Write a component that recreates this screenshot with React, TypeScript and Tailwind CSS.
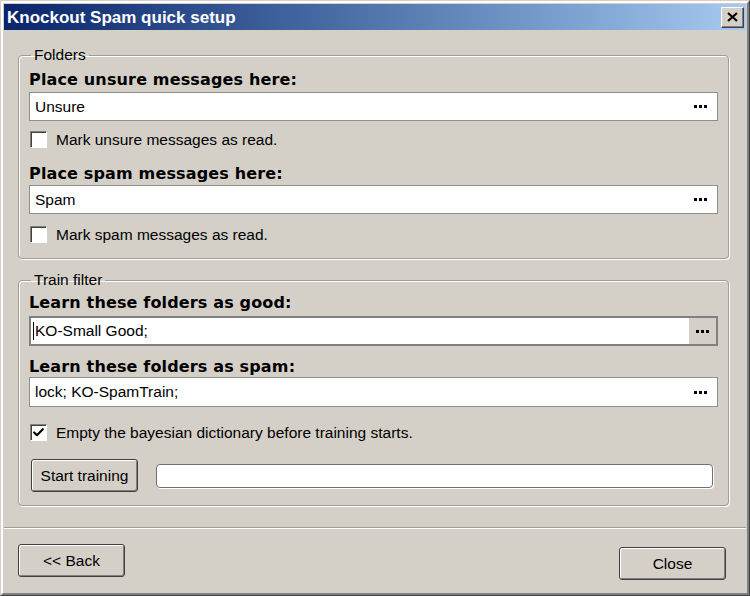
import { Check } from 'lucide-react'

const FONT = "font-['Liberation_Sans',Arial,sans-serif]"
const BOLD = "font-['DejaVu_Sans',Verdana,sans-serif] text-[16px] tracking-[0.15px] font-bold leading-[18px] text-black"

function Dots() {
  return (
    <span className="flex items-center gap-[2px]">
      <span className="h-[3px] w-[3px] bg-black" />
      <span className="h-[3px] w-[3px] bg-black" />
      <span className="h-[3px] w-[3px] bg-black" />
    </span>
  )
}

function FolderField({ value, focused = false, className = '' }: { value: string; focused?: boolean; className?: string }) {
  if (focused) {
    return (
      <div className={`flex h-[30px] items-stretch border-2 border-[#808080] bg-white ${className}`}>
        <div className="flex flex-1 items-center pl-[2px] text-[15.5px] text-black">
          <span className="mr-px h-[18px] w-px bg-black" />
          {value}
        </div>
        <div className="flex w-[27px] items-center justify-center bg-[#d4d0c8]">
          <Dots />
        </div>
      </div>
    )
  }
  return (
    <div className={`flex h-[29px] items-center border border-[#8e8e8e] bg-white pl-[5px] pr-[10px] ${className}`}>
      <span className="flex-1 text-[15.5px] text-black">{value}</span>
      <Dots />
    </div>
  )
}

function Checkbox({ label, checked = false, className = '' }: { label: string; checked?: boolean; className?: string }) {
  return (
    <div className={`flex h-[17px] items-center ${className}`}>
      <span className="ml-px flex h-[17px] w-[17px] items-center justify-center border border-t-[#808080] border-l-[#808080] border-b-white border-r-white bg-white shadow-[inset_1px_1px_0_#404040]">
        {checked && <Check className="h-[13px] w-[13px] text-black" strokeWidth={4} />}
      </span>
      <span className="ml-[9px] text-[15.5px] leading-[18px] text-black">{label}</span>
    </div>
  )
}

function Button({ children, className = '' }: { children: React.ReactNode; className?: string }) {
  return (
    <div
      className={`flex h-[33px] w-[107px] items-center justify-center rounded-[3px] border border-[#404040] bg-[#d4d0c8] text-[15.5px] text-black shadow-[inset_1px_1px_0_#ffffff,inset_-1px_-1px_0_#808080] ${className}`}
    >
      {children}
    </div>
  )
}

function Group({ title, children, className = '' }: { title: string; children: React.ReactNode; className?: string }) {
  return (
    <fieldset
      className={`ml-[14px] w-[711px] rounded-[4px] border border-[#a09d96] px-[10px] shadow-[inset_1px_1px_0_#ffffff,1px_1px_0_#ffffff] ${className}`}
    >
      <legend className="ml-[2px] px-[3px] text-[15.5px] leading-[18px] text-black">{title}</legend>
      {children}
    </fieldset>
  )
}

export default function App() {
  return (
    <div className={`${FONT} flex h-[596px] w-[750px] flex-col border border-[#d4d0c8] border-b-[#404040] border-r-[#404040] bg-[#d4d0c8]`}>
      <div className="flex flex-1 flex-col border-2 border-white border-b-[#808080] border-r-[#808080] p-px">
        {/* title bar */}
        <div className="flex h-[26px] items-center justify-between bg-gradient-to-r from-[#0a246a] to-[#a6caf0] pl-[3px] pr-[2px]">
          <span className="text-[17px] font-bold leading-none text-white">Knockout Spam quick setup</span>
          <span className="flex h-[21px] w-[23px] items-center justify-center border border-[#404040] border-l-white border-t-white bg-[#d4d0c8] shadow-[inset_-1px_-1px_0_#808080]">
            <svg width="11" height="10" viewBox="0 0 11 10">
              <path d="M1 1 L10 9 M10 1 L1 9" stroke="black" strokeWidth="2.2" />
            </svg>
          </span>
        </div>

        <Group title="Folders" className="mt-[16px] pb-[15px]">
          <div className={`mt-[7px] ${BOLD}`}>Place unsure messages here:</div>
          <FolderField value="Unsure" className="mt-[3px]" />
          <Checkbox label="Mark unsure messages as read." className="mt-[10px]" />
          <div className={`mt-[17px] ${BOLD}`}>Place spam messages here:</div>
          <FolderField value="Spam" className="mt-[2px]" />
          <Checkbox label="Mark spam messages as read." className="mt-[12px]" />
        </Group>

        <Group title="Train filter" className="mt-[12px] pb-[13px]">
          <div className={`mt-[5px] ${BOLD}`}>Learn these folders as good:</div>
          <FolderField value="KO-Small Good;" focused className="mt-[4px]" />
          <div className={`mt-[12px] ${BOLD}`}>Learn these folders as spam:</div>
          <FolderField value="lock; KO-SpamTrain;" className="mt-[1px] h-[30px]" />
          <Checkbox label="Empty the bayesian dictionary before training starts." checked className="mt-[17px]" />
          <div className="mt-[18px] flex items-center">
            <Button className="ml-[2px]">Start training</Button>
            <div className="ml-[18px] h-[24px] w-[557px] rounded-[4px] border border-[#707070] bg-white shadow-[1px_1px_0_#ffffff]" />
          </div>
        </Group>

        <div className="mt-[21px] h-0 border-t border-b border-t-[#a09d96] border-b-white" />

        <div className="flex items-start justify-between px-[14px]">
          <Button className="mt-[15px]">&lt;&lt; Back</Button>
          <Button className="mt-[18px] mr-[6px]">Close</Button>
        </div>
      </div>
    </div>
  )
}
